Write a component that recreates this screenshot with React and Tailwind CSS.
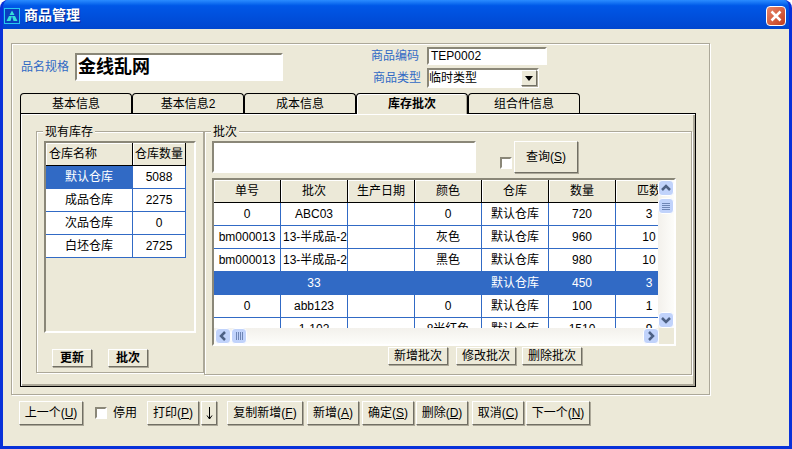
const bevel = "border border-t-white border-l-white border-r-[#716f64] border-b-[#716f64] shadow-[1px_1px_0_#aca899] bg-[#ece9d8]"
const sunken = "border-2 border-t-[#8a8778] border-l-[#8a8778] border-r-white border-b-white bg-white"
const etched = "border border-[#aca899] shadow-[inset_1px_1px_0_white,1px_1px_0_white]"

const blue = "border-r border-b border-[#316ac5]"

function Btn({ className, children }) {
    return <div className={`${bevel} flex items-center justify-center whitespace-nowrap ${className}`}>{children}</div>
}

function Mn({ text, k }) {
    return <>{text}(<u>{k}</u>)</>
}

function Legend({ children, className }) {
    return <span className={`absolute -top-2 bg-[#ece9d8] px-0.5 leading-4 ${className}`}>{children}</span>
}

function Check({ className }) {
    return <div className={`${sunken} w-3 h-3 ${className}`}></div>
}

function Head({ children, left }) {
    return (
        <div className={`flex items-center whitespace-nowrap overflow-hidden border-r border-b border-black shadow-[inset_1px_1px_0_white] bg-[#ece9d8] ${left ? "justify-start pl-0.75" : "justify-center"}`}>
            {children}
        </div>
    )
}

function Cell({ children, sel, left }) {
    return (
        <div className={`${blue} flex items-center whitespace-nowrap overflow-hidden ${left ? "justify-start pl-0.5" : "justify-center"} ${sel ? "bg-[#316ac5] text-white" : "bg-white"}`}>
            {children}
        </div>
    )
}

function ScrollBtn({ dir, className }) {
    const d = { up: "M3 9 L7 5 L11 9", down: "M3 5 L7 9 L11 5", left: "M9 3 L5 7 L9 11", right: "M5 3 L9 7 L5 11" }[dir]
    return (
        <div className={`w-4 h-4 shrink-0 rounded-sm border border-white bg-[#c1d3fb] flex items-center justify-center ${className || ""}`}>
            <svg width="14" height="14" viewBox="0 0 14 14" fill="none">
                <path d={d} stroke="#4d6185" strokeWidth="2.5" />
            </svg>
        </div>
    )
}

const stock = [
    ["默认仓库", "5088"],
    ["成品仓库", "2275"],
    ["次品仓库", "0"],
    ["白坯仓库", "2725"],
]

const rows = [
    ["0", "ABC03", "", "0", "默认仓库", "720", "3"],
    ["bm000013", "13-半成品-2", "", "灰色", "默认仓库", "960", "10"],
    ["bm000013", "13-半成品-2", "", "黑色", "默认仓库", "980", "10"],
    ["", "33", "", "", "默认仓库", "450", "3"],
    ["0", "abb123", "", "0", "默认仓库", "100", "1"],
    ["", "1-102", "", "8米红色", "默认仓库", "1510", "9"],
]

const tabs = ["基本信息", "基本信息2", "成本信息", "库存批次", "组合件信息"]

export default function App() {
    return (
        <div className="w-[792px] h-[449px] flex flex-col overflow-hidden rounded-t-lg border-x-3 border-b-3 border-[#0831d9] bg-[#0831d9] text-xs text-black font-['Liberation_Sans','Noto_Sans_CJK_SC',sans-serif]">
            <div className="-mx-0.75 h-7.25 shrink-0 flex items-center pl-1 pr-1.5 bg-linear-to-b from-[#2a8cff] via-[#0057e7] via-20% to-[#0046cf]">
                <svg width="16" height="16" viewBox="0 0 16 16" className="shrink-0 mt-0.5">
                    <rect x="0.5" y="0.5" width="15" height="15" fill="#0a3fc0" stroke="#27c7f0" strokeWidth="1" />
                    <path d="M8 2.5 L10.5 7 L5.5 7 Z M5 8 L8 8 L6.5 13 L2.5 13 Z M11 8 L8 8 L9.5 13 L13.5 13 Z" fill="#36e0d8" />
                </svg>
                <span className="ml-1 text-sm font-bold text-white [text-shadow:1px_1px_0_#0a2a90]">商品管理</span>
                <div className="ml-auto w-5 h-5 mt-0.5 rounded-sm border border-white bg-linear-to-br from-[#e8866a] to-[#c23a17] flex items-center justify-center">
                    <svg width="14" height="14" viewBox="0 0 14 14">
                        <path d="M2.5 2.5 L11.5 11.5 M11.5 2.5 L2.5 11.5" stroke="white" strokeWidth="2.5" />
                    </svg>
                </div>
            </div>

            <div className="flex-1 bg-[#ece9d8] pt-3.5">
                {/* main frame */}
                <div className={`${etched} ml-2 w-[699px] h-88 pl-2 pt-0.75 flex flex-col`}>
                    <div className="h-11.5 shrink-0 flex items-start">
                        <div className="flex items-center gap-1.5 pl-px mt-1.5">
                            <span className="text-[#316ac5]">品名规格</span>
                            <div className={`${sunken} w-52 h-7 pl-px flex items-center text-lg font-bold leading-none`}>金线乱网</div>
                        </div>
                        <div className="ml-22 flex flex-col gap-0.75">
                            <div className="flex items-center gap-2">
                                <span className="text-[#316ac5]">商品编码</span>
                                <div className={`${sunken} w-30 h-4.5 pl-0.5 flex items-center`}>TEP0002</div>
                            </div>
                            <div className="flex items-center gap-1.5 pl-0.5">
                                <span className="text-[#316ac5]">商品类型</span>
                                <div className={`${sunken} w-28 h-5 flex items-center justify-between`}>
                                    <span>临时类型</span>
                                    <div className={`${bevel} w-4 h-4 flex items-center justify-center`}>
                                        <svg width="8" height="5" viewBox="0 0 8 5"><path d="M0 0 H8 L4 5 Z" fill="black" /></svg>
                                    </div>
                                </div>
                            </div>
                        </div>
                    </div>

                    <div className="flex items-end h-5 shrink-0">
                        {tabs.map((t, i) => (
                            <div
                                key={t}
                                className={`w-28 flex items-center justify-center rounded-t-sm border border-black bg-[#ece9d8] ${i === 3
                                    ? "relative z-10 h-5.25 -mb-px border-b-0 font-bold shadow-[inset_1px_1px_0_white,inset_-1px_0_0_#aca899]"
                                    : "h-5 border-b-0"}`}
                            >
                                {t}
                            </div>
                        ))}
                    </div>

                    {/* tab page */}
                    <div className="w-[676px] h-[274px] border border-black shadow-[inset_1px_1px_0_white,inset_-2px_-2px_0_#aca899] pl-3.75 pt-4.25 flex items-start">
                        <div className={`${etched} relative w-42 h-60.5 flex flex-col items-center pt-2.25`}>
                            <Legend className="left-1.5">现有库存</Legend>
                            <div className="border-2 border-t-[#8a8778] border-l-[#8a8778] border-r-white border-b-white w-38 h-48">
                                <div className="grid grid-cols-[87px_53px] auto-rows-[23px]">
                                    <Head left>仓库名称</Head>
                                    <Head>仓库数量</Head>
                                    {stock.map((s, i) => [
                                        <Cell key={s[0]} sel={i === 0}>{s[0]}</Cell>,
                                        <Cell key={s[1]}>{s[1]}</Cell>,
                                    ])}
                                </div>
                            </div>
                            <div className="w-38 mt-4 pl-2 flex gap-4 font-bold">
                                <Btn className="w-10 h-4.5">更新</Btn>
                                <Btn className="w-10 h-4.5">批次</Btn>
                            </div>
                        </div>

                        <div className={`${etched} relative w-122 h-61 pl-1.75 pt-2.25`}>
                            <Legend className="left-1.5">批次</Legend>
                            <div className="flex items-start h-8.25">
                                <div className={`${sunken} w-66 h-8`}></div>
                                <Check className="ml-6 mt-4" />
                                <Btn className="ml-0.5 w-16 h-8"><Mn text="查询" k="S" /></Btn>
                            </div>
                            <div className="mt-1 w-116 h-42 border-2 border-t-[#8a8778] border-l-[#8a8778] border-r-white border-b-white flex flex-col">
                                <div className="flex h-37 shrink-0">
                                    <div className="w-[445px] overflow-hidden">
                                        <div className="grid grid-cols-[repeat(7,67px)] auto-rows-[23px] w-[469px]">
                                            {["单号", "批次", "生产日期", "颜色", "仓库", "数量", "匹数"].map(h => <Head key={h}>{h}</Head>)}
                                            {rows.map((r, i) => r.map((c, j) => (
                                                <Cell key={`${i}-${j}`} sel={i === 3} left={c.startsWith("13-")}>{c}</Cell>
                                            )))}
                                        </div>
                                    </div>
                                    <div className="w-4 flex flex-col bg-linear-to-r from-[#f3f1ec] to-[#fdfdfa]">
                                        <ScrollBtn dir="up" />
                                        <div className="w-4 h-4 mt-0.5 rounded-sm border border-white bg-[#c1d3fb] flex flex-col items-center justify-center gap-px">
                                            <div className="w-2 h-px bg-[#6f86b5]"></div>
                                            <div className="w-2 h-px bg-[#6f86b5]"></div>
                                            <div className="w-2 h-px bg-[#6f86b5]"></div>
                                            <div className="w-2 h-px bg-[#6f86b5]"></div>
                                        </div>
                                        <ScrollBtn dir="down" className="mt-auto" />
                                    </div>
                                </div>
                                <div className="flex-1 flex">
                                    <div className="w-[445px] flex items-start pl-px bg-linear-to-b from-[#f3f1ec] to-[#fdfdfa]">
                                        <ScrollBtn dir="left" />
                                        <div className="w-4 h-4 rounded-sm border border-white bg-[#c1d3fb] flex items-center justify-center gap-px">
                                            <div className="w-px h-2 bg-[#6f86b5]"></div>
                                            <div className="w-px h-2 bg-[#6f86b5]"></div>
                                            <div className="w-px h-2 bg-[#6f86b5]"></div>
                                            <div className="w-px h-2 bg-[#6f86b5]"></div>
                                        </div>
                                        <ScrollBtn dir="right" className="ml-auto" />
                                    </div>
                                </div>
                            </div>
                            <div className="flex ml-44 mt-px">
                                <Btn className="w-15 h-4.5">新增批次</Btn>
                                <Btn className="w-15 h-4.5 ml-2">修改批次</Btn>
                                <Btn className="w-15 h-4.5 ml-1.5">删除批次</Btn>
                            </div>
                        </div>
                    </div>
                </div>

                {/* bottom toolbar */}
                <div className="ml-4 mt-1.5 flex items-center">
                    <Btn className="w-16 h-6"><Mn text="上一个" k="U" /></Btn>
                    <Check className="ml-3" />
                    <span className="ml-1.5">停用</span>
                    <Btn className="ml-2.5 w-13 h-6"><Mn text="打印" k="P" /></Btn>
                    <Btn className="ml-0.5 w-4 h-6">
                        <svg width="7" height="13" viewBox="0 0 7 13" fill="none">
                            <path d="M3.5 0 V12 M1 8.5 L3.5 12 L6 8.5" stroke="black" strokeWidth="1" />
                        </svg>
                    </Btn>
                    <Btn className="ml-2.5 w-19 h-6"><Mn text="复制新增" k="F" /></Btn>
                    <Btn className="ml-1 w-13 h-6"><Mn text="新增" k="A" /></Btn>
                    <Btn className="ml-0.75 w-13 h-6"><Mn text="确定" k="S" /></Btn>
                    <Btn className="ml-0.5 w-13 h-6"><Mn text="删除" k="D" /></Btn>
                    <Btn className="ml-1 w-13 h-6"><Mn text="取消" k="C" /></Btn>
                    <Btn className="ml-0.5 w-16 h-6"><Mn text="下一个" k="N" /></Btn>
                </div>
            </div>
        </div>
    )
}
